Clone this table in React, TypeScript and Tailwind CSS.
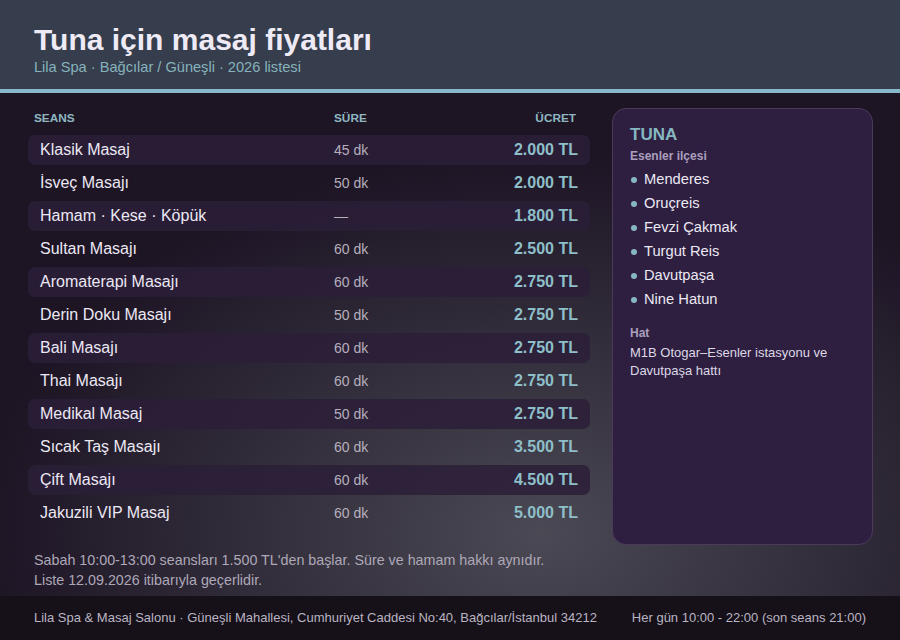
import React from 'react'

const rows = [
  { name: 'Klasik Masaj', time: '45 dk', price: '2.000 TL' },
  { name: 'İsveç Masajı', time: '50 dk', price: '2.000 TL' },
  { name: 'Hamam · Kese · Köpük', time: '—', price: '1.800 TL' },
  { name: 'Sultan Masajı', time: '60 dk', price: '2.500 TL' },
  { name: 'Aromaterapi Masajı', time: '60 dk', price: '2.750 TL' },
  { name: 'Derin Doku Masajı', time: '50 dk', price: '2.750 TL' },
  { name: 'Bali Masajı', time: '60 dk', price: '2.750 TL' },
  { name: 'Thai Masajı', time: '60 dk', price: '2.750 TL' },
  { name: 'Medikal Masaj', time: '50 dk', price: '2.750 TL' },
  { name: 'Sıcak Taş Masajı', time: '60 dk', price: '3.500 TL' },
  { name: 'Çift Masajı', time: '60 dk', price: '4.500 TL' },
  { name: 'Jakuzili VIP Masaj', time: '60 dk', price: '5.000 TL' },
]

const areas = ['Menderes', 'Oruçreis', 'Fevzi Çakmak', 'Turgut Reis', 'Davutpaşa', 'Nine Hatun']

export default function App() {
  return (
    <div className="w-[900px] h-[640px] flex flex-col overflow-hidden bg-[#1c1321] font-['Liberation_Sans',Arial,sans-serif]">
      <header className="h-[89px] shrink-0 bg-[#363d4c] px-[34px] pt-[22px]">
        <h1 className="text-[30px] leading-[36px] font-bold text-[#eeeaf6]">Tuna için masaj fiyatları</h1>
        <p className="text-[14.6px] leading-[18px] text-[#86b3bd]">Lila Spa · Bağcılar / Güneşli · 2026 listesi</p>
      </header>
      <div className="h-[4px] shrink-0 bg-[#88b8c9]" />

      <main className="flex-1 flex flex-col bg-[radial-gradient(ellipse_560px_380px_at_540px_440px,#4a4954_0%,#35313e_45%,#1d1424_100%)]">
        <div className="flex gap-[22px] pl-[28px] pt-[16px]">
          <section className="w-[562px]">
            <div className="flex items-center h-[20px] px-[14px] pl-[6px] text-[11.8px] font-bold text-[#8fb7c0]">
              <span className="flex-1">SEANS</span>
              <span className="w-[142px]">SÜRE</span>
              <span className="w-[100px] text-right">ÜCRET</span>
            </div>
            <div className="mt-[6px] flex flex-col gap-[3px]">
              {rows.map((r, i) => (
                <div
                  key={r.name}
                  className={`flex items-center h-[30px] px-[12px] rounded-[7px] ${i % 2 === 0 ? 'bg-[#2b1e38]/85' : ''}`}
                >
                  <span className="flex-1 text-[16px] text-[#ece8f4]">{r.name}</span>
                  <span className="w-[144px] text-[14px] text-[#b6afbd]">{r.time}</span>
                  <span className="w-[100px] text-right text-[16px] font-bold text-[#8ebfc9]">{r.price}</span>
                </div>
              ))}
            </div>
          </section>

          <aside className="w-[261px] h-[437px] mt-[-1px] rounded-[14px] border border-[#4b3a5c] bg-[#2e1f40] px-[17px] pt-[16px]">
            <div className="text-[17px] leading-[20px] font-bold text-[#86b7c1]">TUNA</div>
            <div className="mt-[3px] text-[12px] leading-[16px] font-bold text-[#ab9fbd]">Esenler ilçesi</div>
            <ul className="mt-[3px] flex flex-col">
              {areas.map((a) => (
                <li key={a} className="flex items-center h-[24px] text-[14.7px] text-[#ece8f4]">
                  <span className="w-[6px] h-[6px] rounded-full bg-[#86b7c1] ml-[1px] mr-[7px] mt-[2px]" />
                  {a}
                </li>
              ))}
            </ul>
            <div className="mt-[14px] text-[12px] leading-[16px] font-bold text-[#ab9fbd]">Hat</div>
            <p className="mt-[3px] text-[13px] leading-[18px] text-[#ddd8e6]">M1B Otogar–Esenler istasyonu ve Davutpaşa hattı</p>
          </aside>
        </div>

        <div className="mt-auto px-[34px] pb-[6px] text-[14.3px] leading-[20px] text-[#aea8b8]">
          <p>Sabah 10:00-13:00 seansları 1.500 TL'den başlar. Süre ve hamam hakkı aynıdır.</p>
          <p>Liste 12.09.2026 itibarıyla geçerlidir.</p>
        </div>
      </main>

      <footer className="h-[44px] shrink-0 bg-[#161119] flex items-center justify-between px-[34px] text-[13px] text-[#bab4c2]">
        <span>Lila Spa &amp; Masaj Salonu · Güneşli Mahallesi, Cumhuriyet Caddesi No:40, Bağcılar/İstanbul 34212</span>
        <span>Her gün 10:00 - 22:00 (son seans 21:00)</span>
      </footer>
    </div>
  )
}
